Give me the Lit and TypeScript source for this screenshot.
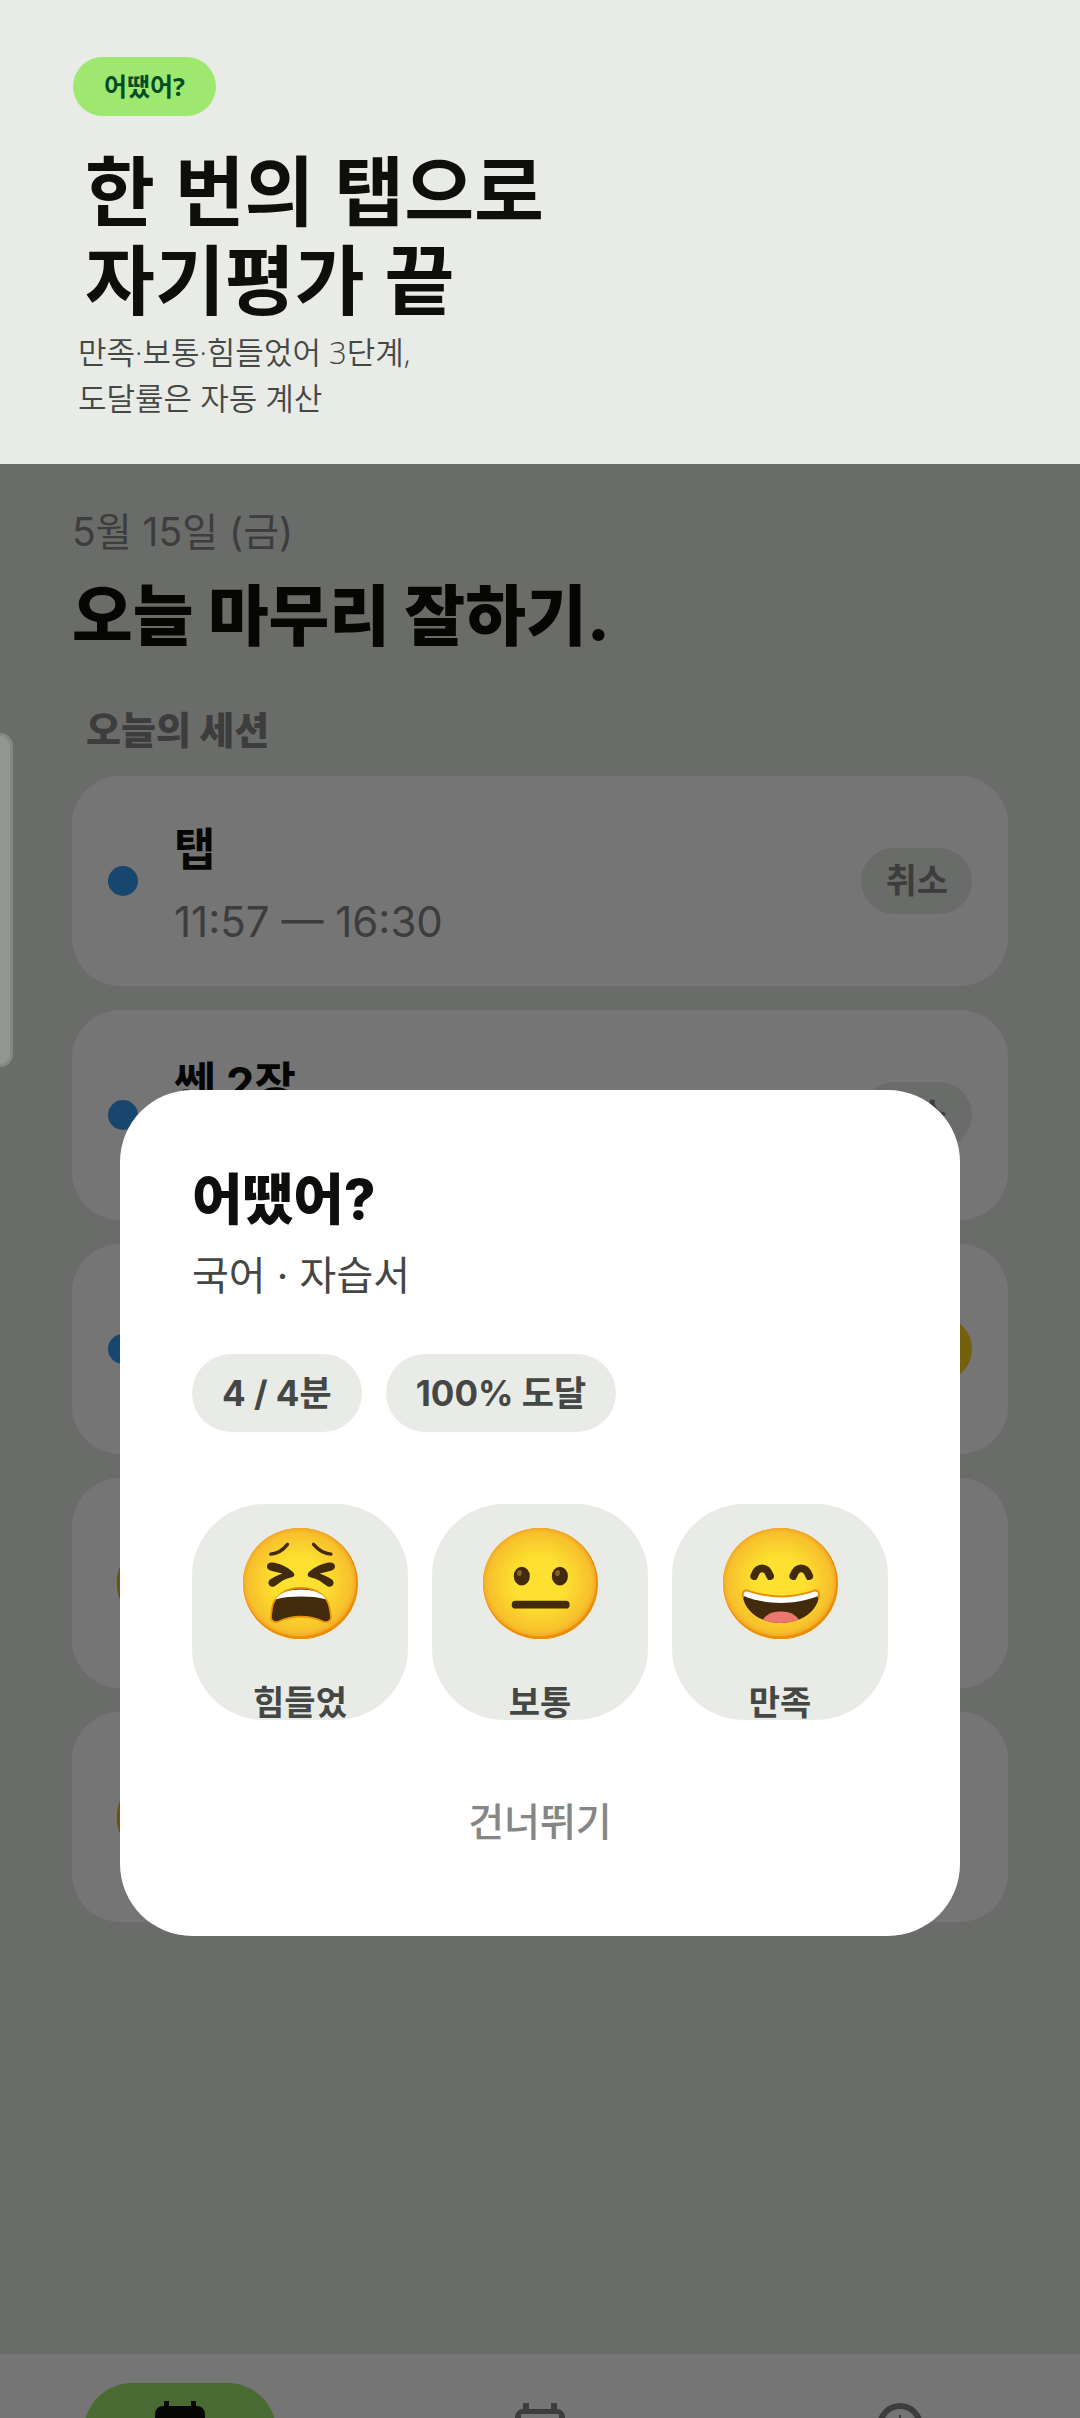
import { LitElement, html, svg, css, nothing } from "lit";
import { customElement, property } from "lit/decorators.js";

type Mood = "tired" | "neutral" | "happy";

interface Session {
  marker: "dot" | "emoji";
  title?: string;
  time?: string;
  action?: "cancel" | "rate";
}

const SESSIONS: Session[] = [
  { marker: "dot", title: "탭", time: "11:57 — 16:30", action: "cancel" },
  { marker: "dot", title: "쎈 2장", action: "cancel" },
  { marker: "dot", action: "rate" },
  { marker: "emoji" },
  { marker: "emoji" },
];

const MOODS: { mood: Mood; label: string }[] = [
  { mood: "tired", label: "힘들었" },
  { mood: "neutral", label: "보통" },
  { mood: "happy", label: "만족" },
];

@customElement("mood-face")
export class MoodFace extends LitElement {
  @property() mood: Mood = "neutral";

  static styles = css`
    :host {
      display: block;
    }
    svg {
      display: block;
      width: 100%;
      height: auto;
    }
  `;

  private tired() {
    const eye =
      "M85 103C110 103 148 125 153 137C155 143 152 146 146 147C128 150 112 160 97 173C88 180 76 174 76 164C76 158 80 154 86 151C94 146 104 141 118 136C104 133 92 130 82 127C66 122 70 103 85 103Z";
    return svg`
      <path d="M83 78Q112 76 133 49M263 78Q234 76 211 49" fill="none" stroke="#422b0d" stroke-width="10" stroke-linecap="round"/>
      <path d=${eye} fill="#422b0d"/>
      <path d=${eye} fill="#422b0d" transform="matrix(-1 0 0 1 347 0)"/>
      <path d="M173 179C125 179 92 205 87 240C85 252 84 260 84 268C84 280 98 284 108 279C128 269 150 265 173 265C196 265 218 269 238 279C248 284 263 280 263 268C263 260 261 252 259 240C254 205 221 179 173 179Z" fill="#422b0d" stroke="#eb8f00" stroke-width="5"/>
      <path d="M98 213C110 193 140 184 173 184C206 184 236 193 248 213C225 207 200 205 173 205C146 205 121 207 98 213Z" fill="#fff"/>
    `;
  }

  private neutral() {
    return svg`
      <ellipse cx="116" cy="144" rx="24" ry="28" fill="#422b0d"/>
      <ellipse cx="230" cy="144" rx="24" ry="28" fill="#422b0d"/>
      <ellipse cx="109" cy="135" rx="7" ry="9" fill="#896024" transform="rotate(20 109 135)"/>
      <ellipse cx="223" cy="135" rx="7" ry="9" fill="#896024" transform="rotate(20 223 135)"/>
      <rect x="86" y="218" width="173" height="23" rx="11" fill="#422b0d"/>
    `;
  }

  private happy() {
    return svg`
      <defs>
        <clipPath id="mouth">
          <path d="M70 187C62 187 58 193 59 203C64 250 112 284 173 284C234 284 283 250 287 203C288 193 284 187 275 187C245 197 210 204 173 204C136 204 100 197 70 187Z"/>
        </clipPath>
      </defs>
      <path d="M93 144C99 127 107 121 117 121C127 121 135 127 141 144M210 144C216 127 224 121 234 121C244 121 252 127 258 144" fill="none" stroke="#422b0d" stroke-width="23" stroke-linecap="round"/>
      <g clip-path="url(#mouth)">
        <rect x="50" y="180" width="250" height="110" fill="#422b0d"/>
        <ellipse cx="173" cy="284" rx="56" ry="34" fill="#ed7770"/>
        <path d="M56 180H292V201C250 218 212 224 173 224C134 224 96 218 56 201Z" fill="#fff"/>
      </g>
      <path d="M60 207C56 193 64 183 75 188C105 198 140 205 173 205C206 205 241 198 271 188C282 183 290 193 286 207" fill="none" stroke="#eb8f00" stroke-width="6" stroke-linecap="round"/>
    `;
  }

  render() {
    const features =
      this.mood === "tired" ? this.tired() : this.mood === "happy" ? this.happy() : this.neutral();
    return html`
      <svg viewBox="0 0 344 333" aria-hidden="true">
        <defs>
          <radialGradient id="skin" cx="0.5" cy="0.5" r="0.51">
            <stop offset="0.45" stop-color="#fde030" />
            <stop offset="0.9" stop-color="#f7c02b" />
            <stop offset="1" stop-color="#f4a223" />
          </radialGradient>
        </defs>
        <ellipse cx="172" cy="166.5" rx="172" ry="166.5" fill="#eb8f00" />
        <ellipse cx="169" cy="162" rx="169" ry="162" fill="url(#skin)" />
        ${features}
      </svg>
    `;
  }
}

@customElement("session-row")
export class SessionRow extends LitElement {
  @property({ attribute: false }) session!: Session;

  static styles = css`
    :host {
      display: flex;
      align-items: center;
      gap: 36px;
      min-height: 210px;
      padding: 32px 36px;
      box-sizing: border-box;
      border-radius: 48px;
      background: #fff;
    }
    .dot {
      width: 30px;
      height: 30px;
      border-radius: 50%;
      background: #349bf0;
    }
    .face {
      width: 96px;
      margin-left: 9px;
    }
    .text {
      flex: 1;
      min-height: 144px;
    }
    .title {
      margin: 0;
      font-size: 45px;
      font-weight: 700;
      line-height: 82px;
      color: #0e0f0c;
    }
    .time {
      margin: 0;
      font-size: 42px;
      line-height: 62px;
      color: #868685;
    }
    button {
      min-width: 110px;
      height: 66px;
      padding: 0 24px;
      border: 0;
      border-radius: 33px;
      font: inherit;
      font-size: 34px;
      font-weight: 700;
      line-height: 66px;
      color: #868685;
      background: #e8ebe6;
    }
    button.rate {
      background: #ffd11a;
    }
  `;

  render() {
    const { marker, title, time, action } = this.session;
    return html`
      ${marker === "dot"
        ? html`<span class="dot"></span>`
        : html`<mood-face class="face" mood="happy"></mood-face>`}
      <div class="text">
        ${title ? html`<h3 class="title">${title}</h3>` : nothing}
        ${time ? html`<p class="time">${time}</p>` : nothing}
      </div>
      ${action === "cancel" ? html`<button type="button">취소</button>` : nothing}
      ${action === "rate" ? html`<button type="button" class="rate"></button>` : nothing}
    `;
  }
}

@customElement("rating-dialog")
export class RatingDialog extends LitElement {
  static styles = css`
    :host {
      display: block;
    }
    dialog {
      position: static;
      display: flex;
      flex-direction: column;
      width: 100%;
      margin: 0;
      padding: 72px;
      box-sizing: border-box;
      border: 0;
      border-radius: 72px;
      background: #fff;
      color: #454745;
    }
    h2 {
      margin: 0;
      font-size: 55px;
      font-weight: 800;
      line-height: 74px;
      color: #0e0f0c;
    }
    .subject {
      margin: 10px 0 0;
      font-size: 40px;
      line-height: 60px;
    }
    .stats {
      display: flex;
      gap: 24px;
      margin: 48px 0 72px;
      padding: 0;
      list-style: none;
    }
    .stats li {
      padding: 0 30px;
      border-radius: 39px;
      font-size: 35px;
      font-weight: 700;
      line-height: 78px;
      background: #e8ebe6;
    }
    .moods {
      display: grid;
      grid-template-columns: repeat(3, 1fr);
      gap: 24px;
    }
    .mood {
      display: flex;
      flex-direction: column;
      align-items: center;
      justify-content: space-between;
      height: 216px;
      padding: 24px 0 0;
      border: 0;
      border-radius: 72px;
      font: inherit;
      font-size: 34px;
      font-weight: 700;
      line-height: 34px;
      color: inherit;
      background: #e8ebe6;
    }
    .face {
      width: 115px;
    }
    .skip {
      align-self: center;
      margin-top: 60px;
      padding: 0 36px;
      border: 0;
      font: inherit;
      font-size: 39px;
      font-weight: 500;
      line-height: 84px;
      color: #868685;
      background: none;
    }
  `;

  render() {
    return html`
      <dialog open aria-labelledby="title">
        <h2 id="title">어땠어?</h2>
        <p class="subject">국어 · 자습서</p>
        <ul class="stats">
          <li>4 / 4분</li>
          <li>100% 도달</li>
        </ul>
        <div class="moods">
          ${MOODS.map(
            ({ mood, label }) => html`
              <button type="button" class="mood">
                <mood-face class="face" mood=${mood}></mood-face>
                <span>${label}</span>
              </button>
            `
          )}
        </div>
        <button type="button" class="skip">건너뛰기</button>
      </dialog>
    `;
  }
}

@customElement("app-root")
export class AppRoot extends LitElement {
  static styles = css`
    :host {
      display: flex;
      flex-direction: column;
      height: 100vh;
      overflow: hidden;
      font-family: Inter, "Noto Sans CJK KR", sans-serif;
      color: #0e0f0c;
      background: #e8ebe6;
    }
    .banner {
      flex: none;
      padding: 57px 73px 43px;
      font-family: "Open Sans", "Noto Sans CJK KR", sans-serif;
    }
    .tag {
      display: block;
      width: fit-content;
      padding: 0 31px;
      border-radius: 30px;
      font-size: 25px;
      font-weight: 700;
      line-height: 59px;
      color: #054d28;
      background: #9fe870;
    }
    .headline {
      margin: 30px 0 0 12px;
      font-size: 76px;
      font-weight: 700;
      line-height: 89px;
    }
    .lead {
      margin: 5px 0 0 5px;
      font-size: 31px;
      font-weight: 350;
      line-height: 46px;
      color: #454745;
    }
    .screen {
      position: relative;
      display: flex;
      flex: 1;
      flex-direction: column;
      min-height: 0;
      overflow: hidden;
    }
    main {
      flex: 1;
      padding: 41px 72px;
      min-height: 0;
    }
    .date {
      margin: 0;
      font-size: 39px;
      line-height: 54px;
      color: #868685;
    }
    .goal {
      margin: 12px 0 0;
      font-size: 66px;
      font-weight: 800;
      line-height: 90px;
    }
    .section {
      margin: 45px 0 0 14px;
      font-size: 38px;
      font-weight: 800;
      line-height: 48px;
      color: #868685;
    }
    .sessions {
      display: flex;
      flex-direction: column;
      gap: 24px;
      margin-top: 22px;
    }
    nav {
      display: grid;
      flex: none;
      grid-template-columns: repeat(3, 1fr);
      justify-items: center;
      height: 64px;
      box-sizing: border-box;
      padding-top: 29px;
      background: #fff;
      overflow: hidden;
    }
    nav a {
      display: grid;
      place-items: center;
      width: 192px;
      height: 96px;
      border-radius: 48px;
      color: #868685;
    }
    nav a.current {
      color: #0e0f0c;
      background: #9fe870;
    }
    nav svg {
      width: 66px;
      height: 66px;
    }
    .scrim {
      position: absolute;
      inset: 0;
      display: grid;
      align-items: center;
      padding: 144px 120px 0;
      background: rgba(0, 0, 0, 0.54);
    }
    .handle {
      position: absolute;
      top: 269px;
      left: 0;
      width: 13px;
      height: 334px;
      box-sizing: border-box;
      border: 3px solid #868886;
      border-left: 0;
      border-radius: 0 14px 14px 0;
      background: #939691;
    }
  `;

  render() {
    return html`
      <header class="banner">
        <span class="tag">어땠어?</span>
        <h1 class="headline">한 번의 탭으로<br />자기평가 끝</h1>
        <p class="lead">만족·보통·힘들었어 3단계,<br />도달률은 자동 계산</p>
      </header>
      <div class="screen">
        <main>
          <p class="date">5월 15일 (금)</p>
          <h2 class="goal">오늘 마무리 잘하기.</h2>
          <h3 class="section">오늘의 세션</h3>
          <div class="sessions">
            ${SESSIONS.map((s) => html`<session-row .session=${s}></session-row>`)}
          </div>
        </main>
        <nav>
          <a class="current" href="#today">
            <svg viewBox="0 0 66 66" aria-hidden="true">
              <path d="M17 3h5v5h22V3h5v5h1a8 8 0 0 1 8 8v40H8V16a8 8 0 0 1 8-8h1z" fill="currentColor" />
            </svg>
          </a>
          <a href="#calendar">
            <svg viewBox="0 0 66 66" aria-hidden="true">
              <path d="M16 5h6v6h22V5h6v6a8 8 0 0 1 8 8v40H8V19a8 8 0 0 1 8-8zM14 16v38h38V16z" fill="currentColor" fill-rule="evenodd" />
            </svg>
          </a>
          <a href="#history">
            <svg viewBox="0 0 66 66" aria-hidden="true">
              <circle cx="33" cy="28" r="20" fill="none" stroke="currentColor" stroke-width="6" />
              <path d="M33 17v14l9 6" fill="none" stroke="currentColor" stroke-width="2" />
            </svg>
          </a>
        </nav>
        <div class="scrim">
          <rating-dialog></rating-dialog>
        </div>
        <div class="handle"></div>
      </div>
    `;
  }
}
